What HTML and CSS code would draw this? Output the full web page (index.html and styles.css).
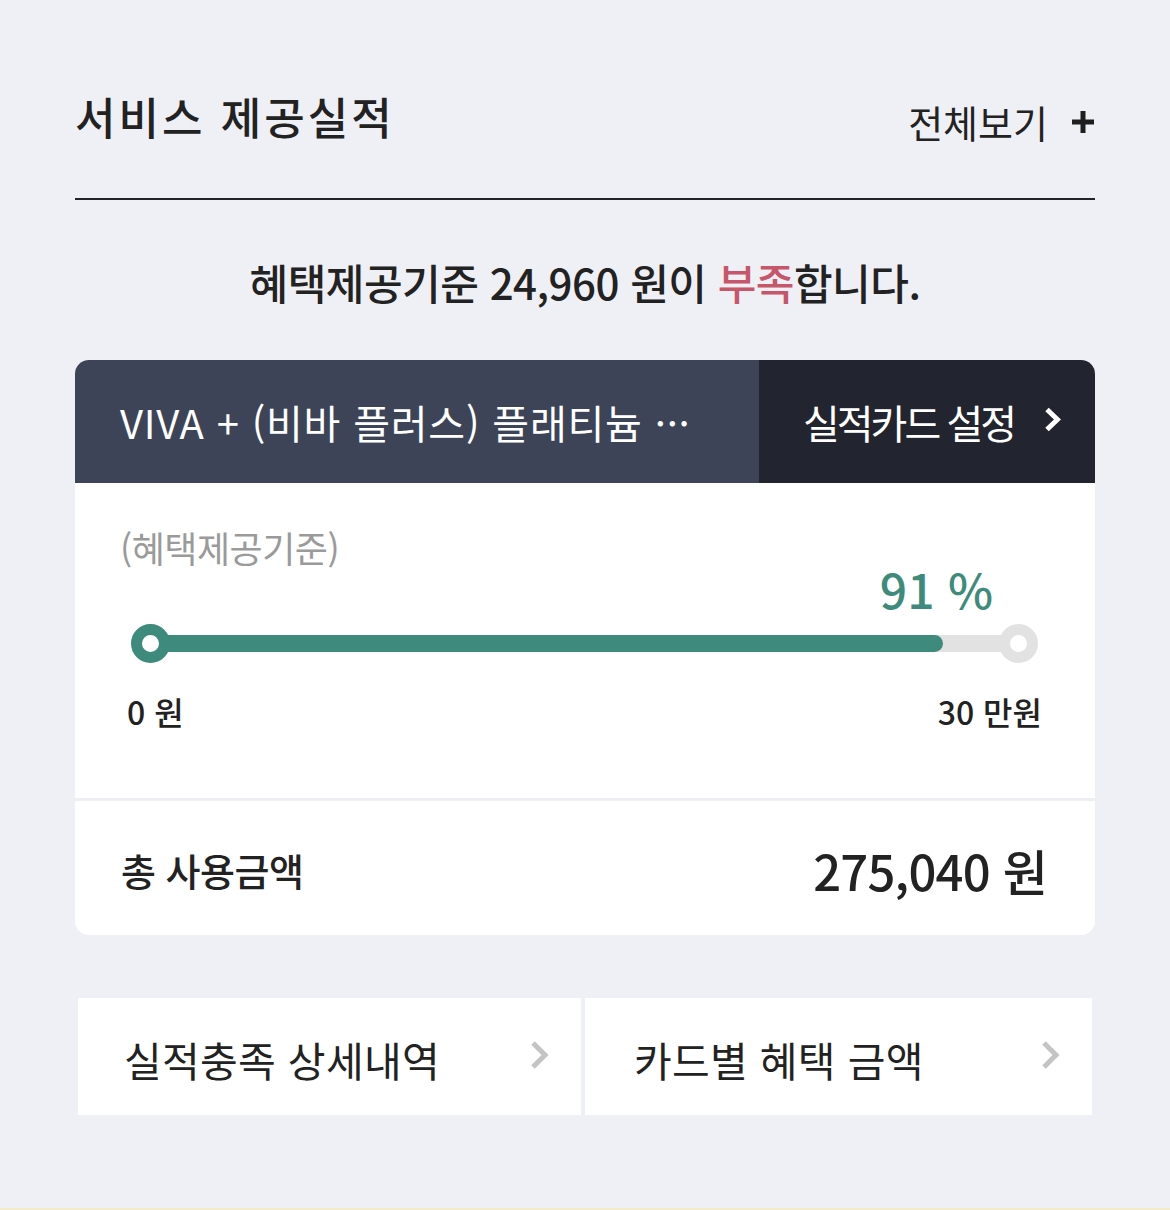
FILE: index.html
```html
<!DOCTYPE html>
<html lang="ko">
<head>
<meta charset="utf-8">
<link rel="stylesheet" href="styles.css">
</head>
<body>
<div class="page">
  <div class="wrap">
    <div class="head">
      <h1 class="title">서비스 제공실적</h1>
      <a class="more">전체보기
        <svg class="plus" width="22" height="22" viewBox="0 0 22 22"><path d="M11 0V22M0 11H22" stroke="#1e1e1e" stroke-width="5"/></svg>
      </a>
    </div>
    <p class="notice">혜택제공기준 24,960 원이 <span class="short">부족</span>합니다.</p>

    <div class="card">
      <div class="card-head">
        <div class="card-name">VIVA + (비바 플러스) 플래티늄 ···</div>
        <div class="card-set">실적카드 설정
          <svg class="chev" width="17" height="25" viewBox="0 0 17 25"><path d="M3 2.5L13.5 12.5L3 22.5" fill="none" stroke="#fff" stroke-width="5"/></svg>
        </div>
      </div>
      <div class="card-body">
        <div class="basis">(혜택제공기준)</div>
        <div class="pct">91 %</div>
        <div class="bar">
          <div class="track"><div class="fill" style="width:91.2%"></div></div>
          <span class="dot dot-start"></span>
          <span class="dot dot-end"></span>
        </div>
        <div class="scale"><span>0 원</span><span>30 만원</span></div>
      </div>
      <div class="total">
        <span class="total-label">총 사용금액</span>
        <span class="total-value">275,040 원</span>
      </div>
    </div>

    <div class="links">
      <a class="link">실적충족 상세내역
        <svg class="chev-g" width="21" height="30" viewBox="0 0 21 30"><path d="M4 3L16 15L4 27" fill="none" stroke="#c4c4c4" stroke-width="5"/></svg>
      </a>
      <a class="link">카드별 혜택 금액
        <svg class="chev-g" width="21" height="30" viewBox="0 0 21 30"><path d="M4 3L16 15L4 27" fill="none" stroke="#c4c4c4" stroke-width="5"/></svg>
      </a>
    </div>
  </div>
</div>
</body>
</html>
```

FILE: styles.css
```css
* { box-sizing: border-box; }
html, body { margin: 0; padding: 0; }
body {
  background: #eff0f5;
  font-family: "Noto Sans CJK KR", "Noto Sans", sans-serif;
  color: #1e1e1e;
}
.page {
  height: 1210px;
  border-bottom: 2px solid #f3ecc8;
  overflow: hidden;
}
.wrap {
  padding: 0 75px;
}
.head {
  display: flex;
  justify-content: space-between;
  align-items: center;
  height: 200px;
  padding-top: 34px;
  border-bottom: 2.5px solid #222329;
}
.title {
  margin: 0;
  font-size: 44px;
  font-weight: 500;
  letter-spacing: 3px;
  line-height: 64px;
  color: #222;
}
.more {
  display: flex;
  align-items: center;
  gap: 24px;
  font-size: 38px;
  font-weight: 400;
  line-height: 50px;
  color: #222;
  padding-top: 12px;
}
.plus { display: block; margin-right: 1px; }
.notice {
  margin: 0;
  height: 160px;
  text-align: center;
  line-height: 150px;
  padding-top: 7px;
  font-size: 42px;
  font-weight: 500;
  letter-spacing: -0.5px;
  color: #222;
}
.short { color: #c8566b; }

.card {
  background: #fff;
  border-radius: 14px;
  overflow: hidden;
}
.card-head {
  display: flex;
  height: 123px;
  color: #fff;
  font-size: 40px;
  font-weight: 400;
}
.card-name {
  width: 684px;
  background: #3d4457;
  display: flex;
  align-items: center;
  padding-left: 45px;
  letter-spacing: 0.8px;
  white-space: nowrap;
}
.card-set {
  flex: 1;
  background: #22252f;
  display: flex;
  align-items: center;
  padding-left: 44px;
  gap: 30px;
  letter-spacing: -3px;
}
.chev { display: block; margin-top: -4px; }

.card-body {
  padding: 40px 45px 67px;
}
.basis {
  font-size: 36px;
  line-height: 48px;
  color: #9a9a9a;
  letter-spacing: -0.5px;
}
.pct {
  margin-top: -8px;
  text-align: right;
  padding-right: 57px;
  font-size: 48px;
  line-height: 50px;
  font-weight: 500;
  color: #3e8a7c;
}
.bar {
  position: relative;
  height: 39px;
  margin: 11px 12px 0 11px;
}
.track {
  position: absolute;
  left: 19px;
  right: 19px;
  top: 11px;
  height: 17px;
  background: #e2e2e2;
  border-radius: 9px;
}
.fill {
  height: 100%;
  background: #3e8a7c;
  border-radius: 9px;
}
.dot {
  position: absolute;
  top: 0;
  width: 39px;
  height: 39px;
  border-radius: 50%;
  background: #fff;
  border: 11.5px solid #3e8a7c;
}
.dot-start { left: 0; }
.dot-end { right: 0; border-color: #e2e2e2; }
.scale {
  display: flex;
  justify-content: space-between;
  margin-top: 28px;
  padding: 0 8px 0 7px;
  font-size: 32px;
  line-height: 40px;
  font-weight: 500;
  color: #222;
}
.total {
  border-top: 3px solid #eeeff2;
  height: 137px;
  display: flex;
  justify-content: space-between;
  align-items: center;
  padding: 2px 48px 0 46px;
}
.total-label {
  font-size: 38px;
  font-weight: 500;
  letter-spacing: -0.5px;
  color: #222;
}
.total-value {
  font-size: 49px;
  font-weight: 500;
  letter-spacing: -0.8px;
  color: #222;
}
.links {
  display: grid;
  grid-template-columns: 503px 1fr;
  gap: 4px;
  margin: 63px 3px 0;
}
.link {
  height: 117px;
  background: #fff;
  display: flex;
  align-items: center;
  justify-content: space-between;
  padding: 4px 31px 0 46px;
  font-size: 41px;
  font-weight: 400;
  letter-spacing: 0.3px;
  color: #222;
}
.link:last-child { padding-left: 49px; }
.chev-g { display: block; margin-top: -8px; }
```
